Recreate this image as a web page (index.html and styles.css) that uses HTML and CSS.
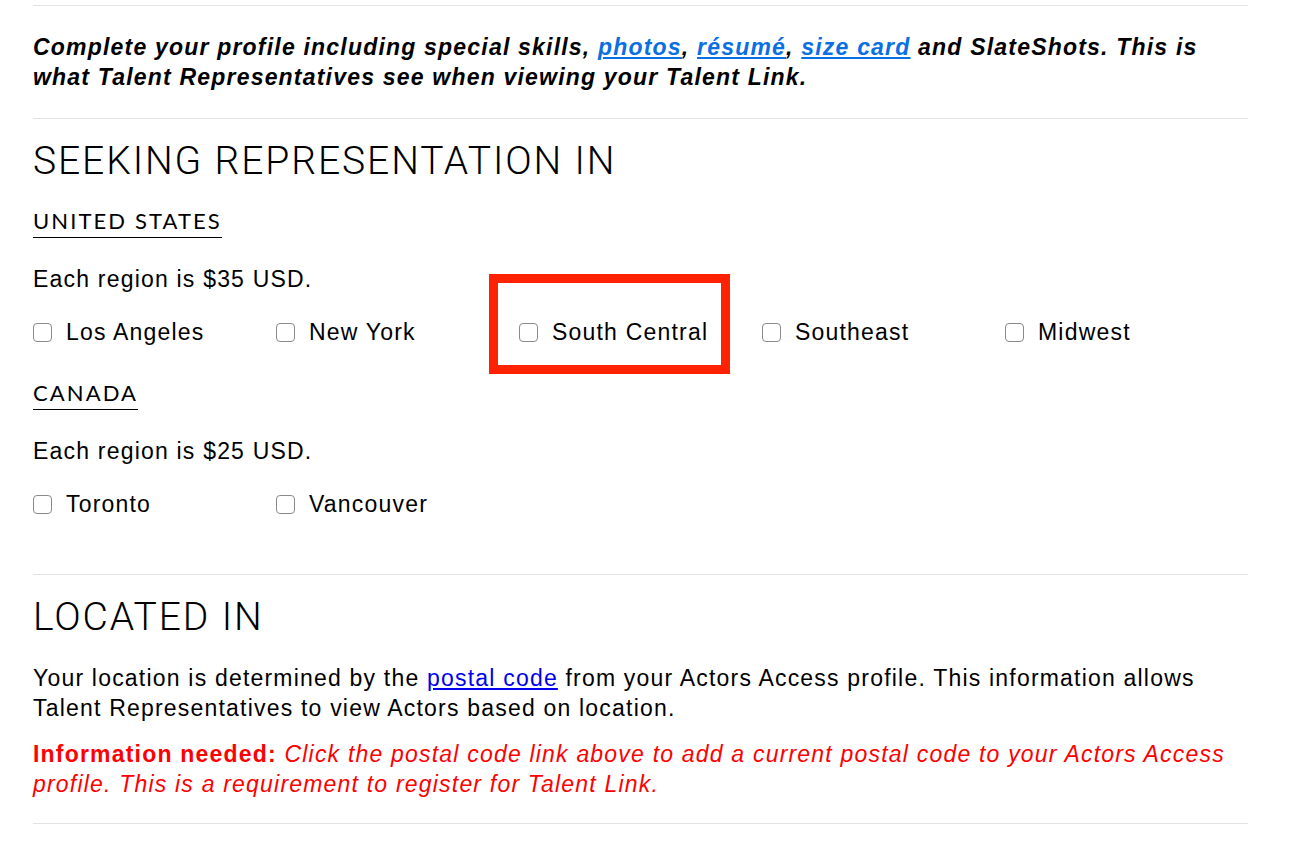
FILE: index.html
```html
<!DOCTYPE html>
<html lang="en">
<head>
<meta charset="utf-8">
<title>Talent Link</title>
<link rel="stylesheet" href="styles.css">
</head>
<body>
<main class="page">
  <hr class="rule rule-top">
  <p class="intro">Complete your profile including special skills, <a href="#">photos</a>, <a href="#">résumé</a>, <a href="#">size card</a> and SlateShots. This is what Talent Representatives see when viewing your Talent Link.</p>
  <hr class="rule">
  <section class="section">
    <h1 class="heading">SEEKING REPRESENTATION IN</h1>
    <h2 class="country"><span>UNITED STATES</span></h2>
    <p class="price">Each region is $35 USD.</p>
    <div class="regions">
      <label class="region"><input type="checkbox" class="box"><span>Los Angeles</span></label>
      <label class="region"><input type="checkbox" class="box"><span>New York</span></label>
      <label class="region region-flagged"><input type="checkbox" class="box"><span>South Central</span><span class="flag"></span></label>
      <label class="region"><input type="checkbox" class="box"><span>Southeast</span></label>
      <label class="region"><input type="checkbox" class="box"><span>Midwest</span></label>
    </div>
    <h2 class="country"><span>CANADA</span></h2>
    <p class="price">Each region is $25 USD.</p>
    <div class="regions">
      <label class="region"><input type="checkbox" class="box"><span>Toronto</span></label>
      <label class="region"><input type="checkbox" class="box"><span>Vancouver</span></label>
    </div>
  </section>
  <hr class="rule rule-mid">
  <section class="section">
    <h1 class="heading">LOCATED IN</h1>
    <p class="text">Your location is determined by the <a href="#" class="plain-link">postal code</a> from your Actors Access profile. This information allows Talent Representatives to view Actors based on location.</p>
    <p class="text warning"><strong>Information needed:</strong> <em>Click the postal code link above to add a current postal code to your Actors Access profile. This is a requirement to register for Talent Link.</em></p>
  </section>
  <hr class="rule rule-bottom">
</main>
</body>
</html>
```
FILE: styles.css
```css
html, body {
  margin: 0;
  padding: 0;
  background: #ffffff;
}

body {
  font-family: "Liberation Sans", Arial, Helvetica, sans-serif;
  color: #000;
}

.page {
  width: 1215px;
  margin-left: 33px;
  padding-top: 5px;
}

.rule {
  border: 0;
  border-top: 1px solid #e3e3e3;
  margin: 0;
  height: 0;
}

.intro {
  margin: 26px 0 26px;
  font-size: 23px;
  line-height: 30px;
  letter-spacing: 1.2px;
  font-weight: bold;
  font-style: italic;
}

.intro a {
  color: #0a6fe3;
  text-decoration: underline;
}

.heading {
  font-family: Roboto, "Liberation Sans", sans-serif;
  font-weight: 300;
  font-size: 39px;
  line-height: 48px;
  margin: 18px 0 0;
  letter-spacing: 1.9px;
}

.country {
  margin: 23px 0 0;
  font-family: Lato, "Open Sans", sans-serif;
  font-weight: 400;
  font-size: 22px;
  line-height: 26px;
  letter-spacing: 2.1px;
}

.country span {
  display: inline-block;
  border-bottom: 1px solid #000;
  padding-bottom: 3px;
}

.price {
  margin: 26px 0 0;
  font-size: 23px;
  line-height: 30px;
  letter-spacing: 1.2px;
}

.regions {
  display: grid;
  grid-template-columns: repeat(5, 243px);
  grid-template-rows: 30px;
  margin-top: 23px;
  padding-bottom: 10px;
}

.region {
  display: flex;
  align-items: center;
  gap: 14px;
  font-size: 23px;
  line-height: 30px;
  letter-spacing: 1.2px;
  position: relative;
}

.box {
  appearance: none;
  -webkit-appearance: none;
  margin: 0;
  width: 19px;
  height: 19px;
  border: 1px solid #8a8a8a;
  border-radius: 4px;
  background: #fff;
  box-sizing: border-box;
  flex: none;
}

.flag {
  position: absolute;
  left: -30px;
  top: -43px;
  width: 241px;
  height: 100px;
  border: 9px solid #ff2200;
  box-sizing: border-box;
  pointer-events: none;
}

.section + .rule-mid {
  margin-top: 45px;
}

.text {
  margin: 22px 0 0;
  font-size: 23px;
  line-height: 30px;
  letter-spacing: 1.2px;
}

.plain-link {
  color: #0000ee;
  text-decoration: underline;
}

.warning {
  margin-top: 16px;
  color: #ff0000;
}

.warning strong {
  font-weight: bold;
}

.rule-bottom {
  margin-top: 24px;
}
```
